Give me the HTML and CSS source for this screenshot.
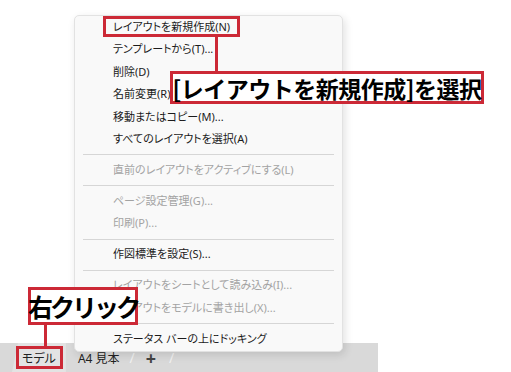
FILE: index.html
```html
<!DOCTYPE html>
<html lang="ja">
<head>
<meta charset="utf-8">
<link rel="stylesheet" href="styles.css">
</head>
<body>
<div class="stage">
  <div class="spacer"></div>
  <div class="tabbar">
    <div class="tab active">モデル</div>
    <div class="tab">A4 見本</div>
    <span class="slash">/</span>
    <span class="plus">+</span>
    <span class="slash">/</span>
  </div>

  <div class="menu">
    <div class="item">レイアウトを新規作成(N)</div>
    <div class="item">テンプレートから(T)...</div>
    <div class="item">削除(D)</div>
    <div class="item">名前変更(R)</div>
    <div class="item">移動またはコピー(M)...</div>
    <div class="item">すべてのレイアウトを選択(A)</div>
    <div class="sep"></div>
    <div class="item dis">直前のレイアウトをアクティブにする(L)</div>
    <div class="sep"></div>
    <div class="item dis">ページ設定管理(G)...</div>
    <div class="item dis">印刷(P)...</div>
    <div class="sep"></div>
    <div class="item">作図標準を設定(S)...</div>
    <div class="sep"></div>
    <div class="item dis">レイアウトをシートとして読み込み(I)...</div>
    <div class="item dis">レイアウトをモデルに書き出し(X)...</div>
    <div class="sep"></div>
    <div class="item">ステータス バーの上にドッキング</div>
  </div>

  <div class="hl hl-new"></div>
  <div class="vline vline-top"></div>
  <div class="callout callout-top">[レイアウトを新規作成]を選択</div>

  <div class="callout callout-right">右クリック</div>
  <div class="vline vline-bottom"></div>
  <div class="hl hl-model"></div>
</div>
</body>
</html>
```

FILE: styles.css
```css
html, body {
  margin: 0;
  padding: 0;
  background: #ffffff;
}

.stage {
  position: relative;
  width: 511px;
  height: 372px;
  overflow: hidden;
  display: flex;
  flex-direction: column;
  font-family: "Noto Sans", "Noto Sans CJK JP", sans-serif;
}

.spacer {
  flex: 1;
}

.tabbar {
  height: 29px;
  width: 378px;
  background: #d9d9d9;
  display: flex;
  align-items: center;
  font-size: 12px;
  color: #222;
  font-feature-settings: "palt";
}

.tab {
  height: 29px;
  display: flex;
  align-items: center;
  padding: 0 6px;
}

.tab.active {
  margin-left: 12px;
  padding: 0 10px 0 10px;
  background: #e3e3e3;
  clip-path: polygon(6px 0, 100% 0, 100% 100%, 0 100%);
}

.tab + .tab {
  margin-left: 6px;
}

.slash {
  color: #f2f2f2;
  font-size: 14px;
  margin: 0 9px 0 4px;
}

.plus {
  font-size: 18px;
  font-weight: bold;
  color: #444;
  margin: 0 9px 0 2px;
}

.menu {
  position: absolute;
  left: 74px;
  top: 15px;
  width: 267px;
  padding: 0 0 1px;
  background: #f9f9f9;
  border: 1px solid #e2e2e2;
  border-radius: 5px;
  box-shadow: 2px 3px 8px rgba(0, 0, 0, 0.12);
  font-size: 11px;
  color: #1b1b1b;
  font-feature-settings: "palt";
}

.item {
  height: 22.4px;
  line-height: 22.4px;
  padding-left: 38px;
  white-space: nowrap;
}

.item.dis {
  color: #a3a3a3;
}

.sep {
  height: 1px;
  margin: 4px 8px 3.6px;
  background: #d6d6d6;
}

.hl {
  position: absolute;
  border: 3px solid #cc2936;
  box-sizing: border-box;
}

.hl-new {
  left: 103px;
  top: 16px;
  width: 137px;
  height: 21px;
}

.hl-model {
  left: 16px;
  top: 346px;
  width: 47px;
  height: 23px;
}

.vline {
  position: absolute;
  width: 3px;
  background: #cc2936;
}

.vline-top {
  left: 215px;
  top: 36px;
  height: 36px;
}

.vline-bottom {
  left: 44px;
  top: 324px;
  height: 23px;
}

.callout {
  position: absolute;
  background: #ffffff;
  border: 3px solid #cc2936;
  box-sizing: border-box;
  color: #000;
  font-weight: bold;
  font-family: "Noto Sans CJK JP", sans-serif;
  white-space: nowrap;
  display: flex;
  align-items: center;
  justify-content: center;
}

.callout-top {
  left: 170px;
  top: 71px;
  width: 314px;
  height: 33px;
  font-size: 23px;
  letter-spacing: -0.5px;
}

.callout-right {
  left: 28px;
  top: 287px;
  width: 110px;
  height: 38px;
  font-size: 25px;
  letter-spacing: -3px;
}
```
